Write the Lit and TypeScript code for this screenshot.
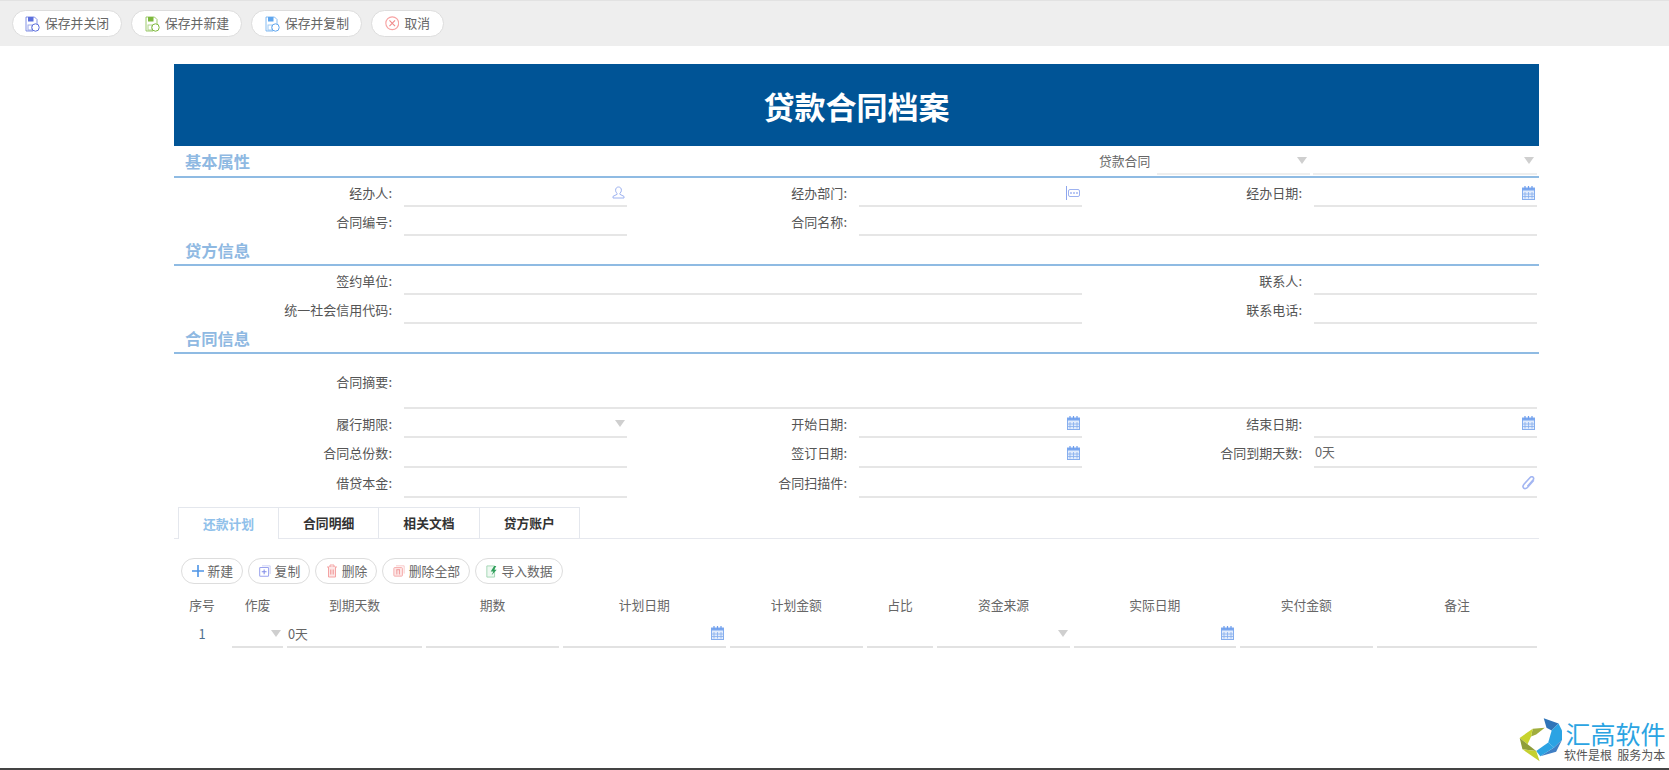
import { LitElement, html, css, nothing } from 'lit';
import { customElement } from 'lit/decorators.js';

const floppy = (c: string, badge: unknown) => html`<svg class="ico" width="15" height="16" viewBox="0 0 15 16" fill="none">
  <path d="M1 1h8.500L12 3.500V9H8v6H1z" fill="#fff" stroke="${c}" stroke-opacity=".75"/>
  <rect x="3" y="1" width="5.500" height="4.500" fill="${c}"/>
  <rect x="3" y="9" width="4" height="5" stroke="${c}" stroke-opacity=".6"/>
  <circle cx="10.500" cy="11.500" r="3.700" fill="#fff" stroke="${c}"/>
  ${badge}
</svg>`;

const plusMark = (c: string) => html`<path d="M8.500 11.500h4M10.500 9.500v4" stroke="${c}"/>`;
const xMark = (c: string) => html`<path d="M9 10l3 3M12 10l-3 3" stroke="${c}"/>`;

const cancelIcon = html`<svg class="ico" width="14.500" height="14.500" viewBox="0 0 14 14" fill="none">
  <circle cx="7" cy="7" r="6.200" stroke="#f7a3a3" stroke-width="1.100"/>
  <path d="M4.300 4.300l5.400 5.400M9.700 4.300L4.300 9.700" stroke="#f08c8c" stroke-width="1.100"/>
</svg>`;

const plusIcon = html`<svg class="ico" width="12" height="12" viewBox="0 0 12 12" fill="none">
  <path d="M6 0v12M0 6h12" stroke="#4d94e6" stroke-width="1.600"/>
</svg>`;

const copyIcon = html`<svg class="ico" width="12" height="12" viewBox="0 0 14 14" fill="none">
  <rect x=".8" y="2.800" width="10.400" height="10.400" rx="1" stroke="#9aa3ee" stroke-width="1.200"/>
  <path d="M3.500 1H13v9.500" stroke="#c3c8f5"/>
  <path d="M6 5.200v5.600M3.200 8h5.600" stroke="#7f8ae8" stroke-width="1.200"/>
</svg>`;

const trashIcon = html`<svg class="ico" width="12" height="14" viewBox="0 0 12 14" fill="none">
  <path d="M1 3h10M4 3V1h4v2" stroke="#f4a3a3"/>
  <path d="M2.500 3v10h7V3" fill="#fde7e7" stroke="#f4a3a3"/>
  <path d="M4.800 5.500v5M7.200 5.500v5" stroke="#f08f8f"/>
</svg>`;

const trashAllIcon = html`<svg class="ico" width="12" height="12" viewBox="0 0 14 14" fill="none">
  <rect x="1" y="3" width="10" height="10" rx="1" fill="#fde7e7" stroke="#f4a3a3"/>
  <path d="M3.500 1H13v9" stroke="#f7c0c0"/>
  <path d="M4.500 5.500V11M7.500 5.500V11M4 5.500h4" stroke="#ef8f8f"/>
</svg>`;

const importIcon = html`<svg class="ico" width="12" height="13" viewBox="0 0 14 15" fill="none">
  <path d="M1 1h9v13H1z" fill="#eef8f1" stroke="#9ad3ad"/>
  <path d="M9.500 1L5.500 7.500h3L6.500 12l6-6.500H9.500L12 1z" fill="#2f9e5b"/>
</svg>`;

const calendar = html`<svg class="ico" width="13" height="14" viewBox="0 0 13 14" fill="none">
  <rect x=".5" y="2" width="12" height="11.500" fill="#e2ecfc" stroke="#86aeee"/>
  <rect x="0" y="2" width="13" height="2.500" fill="#7aa7ef"/>
  <path d="M3 0v3M6.500 0v3M10 0v3" stroke="#6d9ded" stroke-width="1.200"/>
  <path d="M3 6v6.500M6.500 6v6.500M10 6v6.500M1 8h11M1 10.500h11" stroke="#86aeee" stroke-width=".8"/>
</svg>`;

const person = html`<svg class="ico" width="13" height="13" viewBox="0 0 13 13" fill="none">
  <path d="M6.500 1C4.700 1 3.600 2.300 3.600 4.200c0 1.300.6 2.500 1.500 3.100v1L1 10.400V12h11v-1.600L7.900 8.300v-1c.9-.6 1.500-1.800 1.500-3.100C9.400 2.300 8.300 1 6.500 1z" stroke="#9db2f0"/>
</svg>`;

const dept = html`<svg class="ico" width="14" height="14" viewBox="0 0 14 14" fill="none">
  <path d="M.5 0v14" stroke="#8ea6ee"/>
  <rect x="2.500" y="3.500" width="11" height="7" rx="1.500" stroke="#9db2f0"/>
  <path d="M5 6v2M8 6v2M11 6v2" stroke="#8ea6ee" stroke-width="1.200"/>
</svg>`;

const clip = html`<svg class="ico" width="13" height="14" viewBox="0 0 13 14" fill="none">
  <path d="M11.800 4.200L5.600 11.300c-1.200 1.400-2.900 1.700-3.900.8-1-.9-.8-2.500.3-3.800L7.900 1.700c.9-1 2.300-1.200 3.100-.5.800.7.8 1.900 0 2.900L5.500 10.400" stroke="#a3b6f2" stroke-width="1.600"/>
</svg>`;

type Field = { label: string; span?: number; tall?: boolean; loose?: boolean; value?: string; icon?: unknown; arrow?: boolean };
type Section = { title: string; extra?: boolean; fields: Field[] };

const sections: Section[] = [
  {
    title: '基本属性',
    extra: true,
    fields: [
      { label: '经办人', icon: person },
      { label: '经办部门', icon: dept },
      { label: '经办日期', icon: calendar },
      { label: '合同编号' },
      { label: '合同名称', span: 2 },
    ],
  },
  {
    title: '贷方信息',
    fields: [
      { label: '签约单位', span: 2 },
      { label: '联系人' },
      { label: '统一社会信用代码', span: 2 },
      { label: '联系电话' },
    ],
  },
  {
    title: '合同信息',
    fields: [
      { label: '合同摘要', span: 3, tall: true },
      { label: '履行期限', arrow: true },
      { label: '开始日期', icon: calendar },
      { label: '结束日期', icon: calendar },
      { label: '合同总份数', loose: true },
      { label: '签订日期', icon: calendar, loose: true },
      { label: '合同到期天数', value: '0天', loose: true },
      { label: '借贷本金', loose: true },
      { label: '合同扫描件', span: 2, icon: clip, loose: true },
    ],
  },
];

const topButtons = [
  { text: '保存并关闭', icon: floppy('#5c6fdc', xMark('#5c6fdc')) },
  { text: '保存并新建', icon: floppy('#7db83c', plusMark('#7db83c')) },
  { text: '保存并复制', icon: floppy('#5fa6ee', plusMark('#5fa6ee')) },
  { text: '取消', icon: cancelIcon },
];

const subButtons = [
  { text: '新建', icon: plusIcon },
  { text: '复制', icon: copyIcon },
  { text: '删除', icon: trashIcon },
  { text: '删除全部', icon: trashAllIcon },
  { text: '导入数据', icon: importIcon },
];

const tabs = ['还款计划', '合同明细', '相关文档', '贷方账户'];

const columns = ['序号', '作废', '到期天数', '期数', '计划日期', '计划金额', '占比', '资金来源', '实际日期', '实付金额', '备注'];

@customElement('app-root')
export class AppRoot extends LitElement {
  static styles = css`
    :host {
      display: block;
      position: relative;
      height: 770px;
      overflow: hidden;
      background: #fff;
      font-family: 'Noto Sans CJK SC', 'Noto Sans', sans-serif;
      font-size: 12.8px;
      color: #666;
    }

    .toolbar {
      display: flex;
      align-items: center;
      gap: 9px;
      height: 46px;
      padding: 0 11.500px;
      box-sizing: border-box;
      background: #eee;
      border-top: 1px solid #e2e2e2;
    }
    .btn {
      display: inline-flex;
      align-items: center;
      gap: 5px;
      height: 26.500px;
      padding: 0 12.500px;
      box-sizing: border-box;
      border: 1px solid #ddd;
      border-radius: 14px;
      background: #fff;
      color: #666;
      white-space: nowrap;
      line-height: 1;
    }
    .ico {
      flex: none;
      display: block;
    }

    .sheet {
      width: 1365px;
      margin: 18px 0 0 174px;
    }
    .banner {
      display: flex;
      align-items: center;
      justify-content: center;
      height: 82px;
      background: #005496;
      color: #fff;
      font-size: 31px;
      font-weight: 700;
    }

    .section-head {
      display: flex;
      align-items: center;
      height: 27.800px;
      padding-left: 11px;
      border-bottom: 2px solid #8fbbe3;
      color: #8fb9e2;
      font-size: 16.300px;
      font-weight: 700;
    }
    .section-head.first {
      height: 30px;
    }
    .kind {
      display: flex;
      align-items: center;
      margin-left: auto;
      margin-right: 2px;
      height: 27px;
      color: #666;
      font-size: 12.800px;
      font-weight: 400;
    }
    .kind-label {
      width: 58px;
      margin-top: -1px;
    }
    .kind-sel {
      display: flex;
      align-items: center;
      justify-content: flex-end;
      height: 27px;
      padding-right: 3px;
      box-sizing: border-box;
      border-bottom: 2px solid #eee;
    }
    .kind-sel.a {
      width: 153px;
      margin-right: 3px;
    }
    .kind-sel.b {
      width: 224px;
    }

    .grid {
      display: grid;
      grid-template-columns: repeat(3, 455px);
    }
    .field {
      display: flex;
      height: 29px;
    }
    .field.loose {
      height: 30px;
    }
    .field.span2 {
      grid-column: span 2;
    }
    .field.span3 {
      grid-column: span 3;
    }
    .field.tall {
      height: 55px;
    }
    .label {
      flex: none;
      width: 230px;
      padding-right: 12px;
      box-sizing: border-box;
      text-align: right;
      align-self: center;
      white-space: nowrap;
      font-size: 13px;
      color: #555;
    }
    .input {
      flex: 1;
      display: flex;
      align-items: center;
      justify-content: space-between;
      min-width: 0;
      margin-right: 2px;
      padding: 0 2px 0 1px;
      border-bottom: 2px solid #e6e6e6;
    }
    .input .ico,
    .input .arrow {
      margin-left: auto;
      margin-top: 2px;
    }
    .arrow {
      flex: none;
      width: 0;
      height: 0;
      border-left: 5px solid transparent;
      border-right: 5px solid transparent;
      border-top: 7px solid #cfcfcf;
    }

    .tabs {
      display: flex;
      margin-top: 9.400px;
      padding-left: 4px;
      border-bottom: 1px solid #e6e8ee;
      height: 31px;
    }
    .tab {
      display: flex;
      align-items: center;
      justify-content: center;
      width: 100.300px;
      height: 31px;
      box-sizing: border-box;
      border: 1px solid #e4e7ed;
      border-left: none;
      border-bottom: none;
      color: #333;
      font-weight: 700;
    }
    .tab:first-child {
      width: 101px;
      border-left: 1px solid #e4e7ed;
    }
    .tab.active {
      height: 32px;
      background: #fff;
      color: #8fc0ea;
    }

    .subbar {
      display: flex;
      gap: 5px;
      margin: 19px 0 0 7px;
    }
    .subbar .btn {
      gap: 3.500px;
      padding: 0 9px 0 10px;
    }

    .table {
      display: grid;
      grid-template-columns: 56px 55px 139px 137px 166.500px 137.500px 70px 137px 165.500px 137.500px 164px;
      margin-top: 8.500px;
    }
    .th {
      display: flex;
      align-items: center;
      justify-content: center;
      height: 24px;
    }
    .td {
      display: flex;
      height: 31px;
      padding: 0 2px;
      box-sizing: border-box;
    }
    .cell {
      flex: 1;
      display: flex;
      align-items: center;
      justify-content: space-between;
      min-width: 0;
      padding: 4px 2px 0 1px;
      border-bottom: 2px solid #e2e2e2;
    }
    .cell .ico,
    .cell .arrow {
      margin-left: auto;
    }
    .td.seq {
      align-items: center;
      justify-content: center;
      color: #4f6f8f;
      padding-top: 2px;
    }

    .bottom-line {
      position: absolute;
      left: 0;
      right: 0;
      bottom: 0;
      height: 2px;
      background: #444;
    }
    .logo {
      position: absolute;
      right: 3.500px;
      bottom: 7px;
      display: flex;
      align-items: center;
      gap: 2px;
    }
    .logo-text {
      display: flex;
      flex-direction: column;
      align-items: flex-start;
      line-height: 1;
    }
    .logo-name {
      color: #2ba4e2;
      font-size: 25px;
      line-height: 30px;
    }
    .logo-slogan {
      margin-left: -1.500px;
      color: #555;
      font-size: 12px;
      line-height: 14px;
      white-space: pre;
    }
  `;

  private renderField(f: Field) {
    const cls = ['field', f.span ? `span${f.span}` : '', f.tall ? 'tall' : '', f.loose ? 'loose' : ''].join(' ');
    return html`<div class=${cls}>
      <div class="label">${f.label}:</div>
      <div class="input">
        ${f.value ?? nothing}
        ${f.icon ?? nothing}
        ${f.arrow ? html`<span class="arrow"></span>` : nothing}
      </div>
    </div>`;
  }

  private renderSection(s: Section, i: number) {
    return html`
      <div class="section-head ${i === 0 ? 'first' : ''}">
        <span>${s.title}</span>
        ${s.extra
          ? html`<div class="kind">
              <span class="kind-label">贷款合同</span>
              <div class="kind-sel a"><span class="arrow"></span></div>
              <div class="kind-sel b"><span class="arrow"></span></div>
            </div>`
          : nothing}
      </div>
      <div class="grid">${s.fields.map((f) => this.renderField(f))}</div>
    `;
  }

  private renderCell(name: string) {
    if (name === '序号') return html`<div class="td seq">1</div>`;
    let inner: unknown = nothing;
    if (name === '作废' || name === '资金来源') inner = html`<span class="arrow"></span>`;
    if (name === '计划日期' || name === '实际日期') inner = calendar;
    if (name === '到期天数') inner = '0天';
    return html`<div class="td"><div class="cell">${inner}</div></div>`;
  }

  render() {
    return html`
      <div class="toolbar">
        ${topButtons.map((b) => html`<div class="btn">${b.icon}<span>${b.text}</span></div>`)}
      </div>
      <div class="sheet">
        <div class="banner">贷款合同档案</div>
        ${sections.map((s, i) => this.renderSection(s, i))}
        <div class="tabs">
          ${tabs.map((t, i) => html`<div class="tab ${i === 0 ? 'active' : ''}">${t}</div>`)}
        </div>
        <div class="subbar">
          ${subButtons.map((b) => html`<div class="btn">${b.icon}<span>${b.text}</span></div>`)}
        </div>
        <div class="table">
          ${columns.map((c) => html`<div class="th">${c}</div>`)}
          ${columns.map((c) => this.renderCell(c))}
        </div>
      </div>
      <div class="logo">
        <svg width="44" height="46" viewBox="10 12 128 132">
          <polygon points="82,15 125,30 105,50 90,42" fill="#2f74b8" />
          <polygon points="125,30 135,50 135,78 112,100 95,85 105,50" fill="#2ba3e3" />
          <polygon points="112,100 135,78 118,112 72,125" fill="#3f7fc4" />
          <polygon points="95,85 112,100 72,125 60,110" fill="#2ba3e3" />
          <polygon points="50,45 85,42 60,62 45,68" fill="#a0ad3e" />
          <polygon points="12,72 50,45 45,68 35,90" fill="#c8d42e" />
          <polygon points="12,72 35,90 60,110 20,105" fill="#8f9e3a" />
          <polygon points="60,110 70,140 20,105" fill="#c5d030" />
        </svg>
        <div class="logo-text">
          <span class="logo-name">汇高软件</span>
          <span class="logo-slogan">软件是根  服务为本</span>
        </div>
      </div>
      <div class="bottom-line"></div>
    `;
  }
}
